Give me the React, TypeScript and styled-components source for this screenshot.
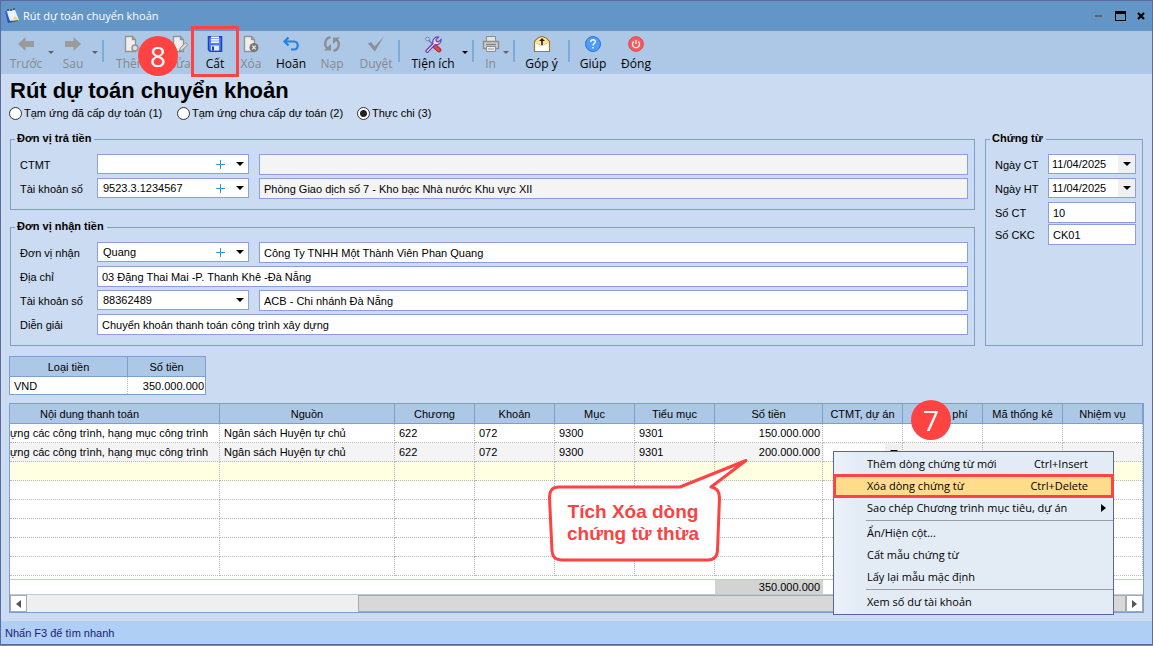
import React from 'react';
import styled, { createGlobalStyle } from 'styled-components';

const formFont = '"Liberation Sans", Arial, sans-serif';
const uiFont = '"Open Sans", "Segoe UI", sans-serif';
const line = '#7c9fd0';
const inputLine = '#8a9fe0';
const red = '#ff4242';

const GlobalStyle = createGlobalStyle`
  *, *::before, *::after { box-sizing: border-box; }
  body {
    margin: 0;
    background: #85858c;
    font: 11px/14px ${formFont};
    color: #000;
  }
  button, input, select { font: inherit; color: inherit; }
`;

const Window = styled.div`
  display: flex;
  flex-direction: column;
  min-height: calc(100vh - 1px);
  border: 1px solid #5c6a9f;
  background: #cbdbf1;
`;

const TitleBar = styled.header`
  display: flex;
  align-items: center;
  height: 30px;
  padding: 0 5px 0 3px;
  background: #6495c7;
  color: #fff;
  font: 11px/16px ${uiFont};
`;

const TitleText = styled.span`
  flex: 1;
  padding-left: 3px;
`;

const WindowButton = styled.button`
  display: grid;
  place-items: center;
  width: 22px;
  height: 22px;
  padding: 0;
  border: 0;
  background: none;
  &:last-child { width: 12px; margin-left: 4px; }
`;

const Toolbar = styled.nav`
  display: flex;
  align-items: flex-start;
  height: 43px;
  padding-left: 3px;
  background: #adc8e6;
  font: 12px/16px ${uiFont};
`;

const ToolButton = styled.button<{ $width: number; $off?: boolean }>`
  position: relative;
  display: flex;
  flex-direction: column;
  align-items: center;
  gap: 3px;
  flex: none;
  width: ${p => p.$width}px;
  padding: 4px 0 0;
  border: 0;
  background: none;
  white-space: nowrap;
  color: ${p => (p.$off ? '#85888c' : '#000')};
`;

const ToolLabel = styled.span`
  display: flex;
  justify-content: center;
  width: 0;
`;

const ToolArrow = styled.button<{ $off?: boolean }>`
  display: grid;
  place-items: center;
  width: 6px;
  height: 43px;
  padding: 0;
  border: 0;
  background: none;
  color: ${p => (p.$off ? '#5d6166' : '#000')};
`;

const Separator = styled.span`
  flex: none;
  width: 2px;
  height: 22px;
  margin: 9px 4px 0;
  background: #7faade;
`;

const StepBadge = styled.span`
  position: absolute;
  z-index: 3;
  display: grid;
  place-items: center;
  width: 40px;
  height: 40px;
  border-radius: 50%;
  background: ${red};
  color: #fff;
  font: 500 28px/40px ${uiFont};
`;

const ToolBadge = styled(StepBadge)`
  top: 5px;
  left: 30px;
`;

const GridBadge = styled(StepBadge)`
  top: -4px;
  right: 192px;
`;

const ToolFrame = styled.span`
  position: absolute;
  z-index: 2;
  top: -5px;
  left: 50%;
  width: 48px;
  height: 51px;
  margin-left: -24px;
  border: 3px solid ${red};
`;

const Body = styled.main`
  padding: 6px 8px 8px;
`;

const Heading = styled.h1`
  margin: 0;
  padding-left: 1px;
  font: bold 22px/22px ${formFont};
`;

const RadioRow = styled.div`
  display: flex;
  height: 22px;
  padding-top: 4px;
`;

const RadioLabel = styled.label<{ $width: number }>`
  display: flex;
  align-items: center;
  gap: 2px;
  height: 14px;
  width: ${p => p.$width}px;
  white-space: nowrap;
`;

const Radio = styled.input`
  appearance: none;
  flex: none;
  width: 13px;
  height: 13px;
  margin: 0;
  border: 1px solid #333;
  border-radius: 50%;
  background: #fff;
  &:checked { background: radial-gradient(circle, #222 3px, #fff 4px); }
`;

const FormArea = styled.div`
  display: flex;
  gap: 10px;
  padding: 9px 1px 0;
`;

const FormColumn = styled.div`
  display: flex;
  flex-direction: column;
  flex: 1;
  min-width: 0;
  gap: 11px;
`;

const Group = styled.fieldset`
  min-width: 0;
  margin: 0;
  padding: 8px 6px 7px 8px;
  border: 1px solid ${line};
`;

const SideGroup = styled(Group)`
  width: 158px;
`;

const Legend = styled.legend`
  height: 13px;
  margin-left: -4px;
  padding: 0 3px 0 2px;
  font-weight: bold;
  line-height: 11px;
`;

const FieldGrid = styled.div`
  display: grid;
  grid-template-columns: 78px 152px 1fr;
  grid-auto-rows: 24px;
`;

const SideGrid = styled.div`
  display: grid;
  grid-template-columns: 54px 1fr;
  grid-template-rows: 24px 24px 22px 22px;
`;

const FieldLabel = styled.label`
  padding: 4px 0 0 1px;
  white-space: nowrap;
`;

const TextBox = styled.input<{ $wide?: boolean; $next?: boolean }>`
  width: ${p => (p.$next ? 'calc(100% - 10px)' : '100%')};
  min-width: 0;
  height: 21px;
  margin: 0 0 0 ${p => (p.$next ? 10 : 0)}px;
  padding: 0 4px;
  border: 1px solid ${inputLine};
  border-radius: 0;
  background: #fff;
  grid-column: ${p => (p.$wide ? 'span 2' : 'auto')};
  &:read-only { background: #f4f4f4; }
`;

const Combo = styled.div`
  position: relative;
  height: 20px;
`;

const ComboSelect = styled.select`
  appearance: none;
  width: 100%;
  height: 20px;
  margin: 0;
  padding: 0 36px 0 5px;
  border: 1px solid ${inputLine};
  border-radius: 0;
  background: #fff;
`;

const DateSelect = styled(ComboSelect)`
  padding: 0 18px 0 3px;
  background: linear-gradient(#f0f0f0, #f0f0f0) right / 17px 100% no-repeat #fff;
`;

const ComboArrow = styled.span`
  position: absolute;
  top: 0;
  right: 5px;
  display: grid;
  place-items: center;
  height: 20px;
  pointer-events: none;
`;

const ComboAdd = styled.button`
  position: absolute;
  top: 1px;
  right: 20px;
  display: grid;
  place-items: center;
  width: 18px;
  height: 18px;
  padding: 0;
  border: 0;
  background: none;
`;

const SumTable = styled.table`
  width: 197px;
  margin-top: 10px;
  border: 1px solid ${line};
  border-spacing: 0;
  table-layout: fixed;
  background: #fff;
`;

const GridPanel = styled.section`
  position: relative;
  margin-top: 8px;
  border: 1px solid ${line};
  background: #fff;
`;

const DataTable = styled.table`
  width: 100%;
  border-spacing: 0;
  table-layout: fixed;
`;

const Th = styled.th<{ $cut?: boolean }>`
  height: 20px;
  padding: 0 ${p => (p.$cut ? 50 : 0)}px 0 0;
  border: solid ${line};
  border-width: 0 1px 1px 0;
  background: #adc8e6;
  font-weight: normal;
  text-align: center;
  white-space: nowrap;
  ${SumTable} &:last-child { border-right: 0; }
`;

const Td = styled.td<{ $right?: boolean; $clip?: boolean }>`
  height: 19px;
  padding: 0 ${p => (p.$right ? 2 : 0)}px 0 ${p => (p.$right || p.$clip ? 0 : 4)}px;
  border: dotted #b9b9b9;
  border-width: 0 1px 1px 0;
  overflow: hidden;
  text-align: ${p => (p.$right ? 'right' : 'left')};
  white-space: nowrap;
  ${SumTable} & { height: 17px; border-bottom: 0; }
  ${SumTable} &:last-child { border-right: 0; padding-right: 1px; }
`;

const Tr = styled.tr<{ $tone?: string }>`
  background: ${p => p.$tone || '#fff'};
`;

const EditTd = styled(Td)`
  padding: 0 0 0 1px;
`;

const CellEditor = styled.div`
  display: flex;
  height: 17px;
  & > input { flex: 1; min-width: 0; height: 17px; padding: 0; border: 0; background: #fff; }
  & > button { display: grid; place-items: center; width: 17px; padding: 0; border: 0; background: #f0f0f0; }
`;

const TotalTable = styled(DataTable)`
  margin-top: 3px;
  border: solid #b9cbdc;
  border-width: 1px 0;
`;

const TotalTd = styled.td<{ $sum?: boolean }>`
  height: 14px;
  padding: 0 3px 0 0;
  background: ${p => (p.$sum ? '#d3d3d3' : '#fff')};
  text-align: right;
  line-height: 14px;
`;

const ScrollBar = styled.div`
  display: flex;
  height: 17px;
  background: #efefef;
`;

const ScrollButton = styled.button`
  display: grid;
  place-items: center;
  width: 17px;
  padding: 0;
  border: 1px solid #a9a9a9;
  background: #fff;
`;

const ScrollGap = styled.span`
  flex: 332;
`;

const ScrollThumb = styled.span`
  flex: 767;
  border: 1px solid #a9a9a9;
  background: #d8d8d8;
`;

const Menu = styled.div`
  position: absolute;
  z-index: 2;
  top: 47px;
  right: 29px;
  width: 281px;
  padding: 1px 0;
  border: 1px solid #5a66a0;
  background: linear-gradient(90deg, #edf2fa, #e3ebf5 24px);
  font: 11px/20px ${uiFont};
`;

const MenuItem = styled.button<{ $hot?: boolean }>`
  position: relative;
  display: flex;
  align-items: center;
  justify-content: space-between;
  width: 100%;
  height: 22px;
  padding: 0 25px 0 33px;
  border: 0;
  background: ${p => (p.$hot ? '#ffdb8c' : 'none')};
  outline: ${p => (p.$hot ? `3px solid ${red}` : '0')};
  outline-offset: -2px;
  white-space: nowrap;
`;

const SubArrow = styled.svg`
  position: absolute;
  right: 7px;
`;

const MenuLine = styled.hr`
  height: 1px;
  margin: 1px 0 1px 32px;
  border: 0;
  background: #9b9da3;
`;

const Callout = styled.div`
  position: absolute;
  z-index: 1;
  top: 51px;
  left: 536px;
  width: 206px;
  height: 110px;
  padding: 46px 32px 0 0;
  color: #fa4343;
  font: bold 19px/22px ${formFont};
  text-align: center;
  & > svg { position: absolute; inset: 0; }
  & > span { position: relative; white-space: nowrap; }
`;

const StatusBar = styled.footer`
  height: 23px;
  margin-top: auto;
  padding: 5px 4px;
  background: #b0cff4;
  color: #20207c;
`;

const Down = ({ size = 8 }: { size?: number }) => (
  <svg width={size} height={size / 2} viewBox="0 0 8 4" aria-hidden="true">
    <path d="M0 0h8L4 4z" fill="currentColor" />
  </svg>
);

const Icon = ({ children }: { children: React.ReactNode }) => (
  <svg width="18" height="18" viewBox="0 0 18 18" fill="none" aria-hidden="true">{children}</svg>
);

const Page = () => (
  <path d="M2.500 1.500h7l3 3v12h-10zM9.500 1.500v3h3" fill="#eee" stroke="#929292" strokeWidth="1.300" />
);

const icons = {
  back: <path d="M1 9l7.500-7v4H17v6H8.500v4z" fill="#9b9b9b" />,
  next: <path d="M17 9L9.500 2v4H1v6h8.500v4z" fill="#9b9b9b" />,
  add: <><Page /><circle cx="12" cy="13" r="3" fill="#ddd" stroke="#949494" strokeWidth="1.500" /></>,
  edit: <><Page /><path d="M8.500 16l.8-3 5.500-5.500 2 2L11.500 15z" fill="#ddd" stroke="#8c8c8c" /></>,
  remove: <><Page /><circle cx="12" cy="12.500" r="4.500" fill="#777" /><path d="M10.200 10.700l3.600 3.600m0-3.600l-3.600 3.600" stroke="#eee" strokeWidth="1.200" /></>,
  save: (
    <>
      <path d="M2.500 1.800h13v14.400H4L2.500 14.700z" fill="#4c7dff" stroke="#1c3ec8" strokeWidth="1.500" />
      <path d="M5 1.500h8V8H5z" fill="#f2f5ff" />
      <path d="M5 3.500h8M5 6h8" stroke="#8ea8f0" />
      <path d="M5 10.500h8v5H5z" fill="#e6ecfb" />
      <path d="M6 11.500h2v4H6z" fill="#1c3ec8" />
    </>
  ),
  undo: <path d="M6.500 2.500L2.500 6.500l4 4M3 6.500h9c5 0 5 8 0 8H9" stroke="#2481e6" strokeWidth="2.200" />,
  reload: (
    <>
      <path d="M7.500 2.300C2 3 .5 10 4.500 13.500M10.500 15.700C16 15 17.500 8 13.500 4.500" stroke="#8c8f93" strokeWidth="2.400" />
      <path d="M1 15.500h7V9zM17 2.500h-7V9z" fill="#8c8f93" />
    </>
  ),
  check: <path d="M1 8.500l3-1.500 3.500 4.500L17 1.500 7.800 16.500z" fill="#8c8f93" />,
  tools: (
    <>
      <path d="M3 3.500l10 10" stroke="#6080b8" strokeWidth="1.500" />
      <circle cx="3.500" cy="4" r="1.800" fill="#c9dcf8" stroke="#6482bc" />
      <path d="M11 11.500l4 3.500" stroke="#b3202c" strokeWidth="4.600" strokeLinecap="round" />
      <path d="M11 11.500l4 3.500" stroke="#e84650" strokeWidth="2.600" strokeLinecap="round" />
      <path d="M2 15.500l7-7c-1-4 2-7 5.500-6.500l-2.500 2.700.6 1.700 1.800.5 2.600-2.500c.5 3.600-2.500 6-6 5.300l-6.800 7.200c-1.300 1-3-.2-2.200-1.400z" fill="#e6d8fa" stroke="#6e3fa4" strokeWidth="1.200" />
    </>
  ),
  print: (
    <>
      <path d="M4.500 1.500h9v5h-9z" fill="#e4e4e4" stroke="#8d8d8d" />
      <path d="M1.500 6.500h15v7h-15z" fill="#cfcfcf" stroke="#8d8d8d" strokeWidth="1.400" />
      <path d="M4 9.500h10" stroke="#858585" strokeWidth="1.500" />
      <path d="M4.500 11.500h9v5h-9z" fill="#eee" stroke="#8d8d8d" />
      <path d="M6 14h6" stroke="#999" />
    </>
  ),
  feedback: (
    <>
      <path d="M1.500 6.500L5 3l4-1.500L13 3l3.500 3.500v10h-15z" fill="#fff" stroke="#a5781c" strokeWidth="1.200" />
      <path d="M2.500 7L5 4l4-1.500L13 4l2.500 3L9 10z" fill="#ffe596" />
      <path d="M2 7l7 4 7-4" stroke="#e3c877" />
      <path d="M9 3L6 6h2.200v4h1.600V6H12z" fill="#222" />
    </>
  ),
  help: (
    <>
      <circle cx="9" cy="9" r="7.500" fill="#4d9cfb" stroke="#2675d8" />
      <path d="M6.800 7c0-3 4.500-2.800 4.500-.2C11.300 8.700 9 8.500 9 10.500M9 12v1.600" stroke="#fff" strokeWidth="1.400" />
    </>
  ),
  close: (
    <>
      <circle cx="9" cy="9" r="7.300" fill="#fb5a5f" stroke="#e23c42" />
      <path d="M9 5v4M6.800 6.500a3.500 3.500 0 1 0 4.400 0" stroke="#fff" strokeWidth="1.200" />
    </>
  ),
};

type ToolProps = {
  icon: keyof typeof icons;
  label: string;
  width: number;
  off?: boolean;
  children?: React.ReactNode;
};

const Tool = ({ icon, label, width, off, children }: ToolProps) => (
  <ToolButton type="button" $width={width} $off={off}>
    <Icon>{icons[icon]}</Icon>
    <ToolLabel>{label}</ToolLabel>
    {children}
  </ToolButton>
);

type ComboProps = { id: string; value: string; add?: boolean };

const ComboBox = ({ id, value, add }: ComboProps) => (
  <Combo>
    <ComboSelect id={id} defaultValue={value}>
      <option>{value}</option>
    </ComboSelect>
    {add && (
      <ComboAdd type="button" aria-label="+">
        <svg width="9" height="9" viewBox="0 0 9 9" aria-hidden="true">
          <path d="M4.500 0v9M0 4.500h9" stroke="#2f93e6" />
        </svg>
      </ComboAdd>
    )}
    <ComboArrow><Down /></ComboArrow>
  </Combo>
);

const DateBox = ({ id, value }: ComboProps) => (
  <Combo>
    <DateSelect id={id} defaultValue={value}>
      <option>{value}</option>
    </DateSelect>
    <ComboArrow><Down /></ComboArrow>
  </Combo>
);

const Columns = () => (
  <colgroup>
    <col />
    {[175, 80, 80, 80, 80, 108, 80, 80, 80, 80].map((w, i) => <col key={i} width={w} />)}
  </colgroup>
);

const headers = [
  'Nội dung thanh toán', 'Nguồn', 'Chương', 'Khoản', 'Mục', 'Tiểu mục',
  'Số tiền', 'CTMT, dự án', 'Khoản phí', 'Mã thống kê', 'Nhiệm vụ',
];

const filled = [
  ['ựng các công trình, hạng mục công trình', 'Ngân sách Huyện tự chủ', '622', '072', '9300', '9301', '150.000.000', '', '', '', ''],
  ['ựng các công trình, hạng mục công trình', 'Ngân sách Huyện tự chủ', '622', '072', '9300', '9301', '200.000.000', '', '', '', ''],
];

const emptyTones = ['#ffffe1', '#fff', '#fff', '#fff', '#fff', '#fff'];

const radios = [
  { label: 'Tạm ứng đã cấp dự toán (1)', width: 168 },
  { label: 'Tạm ứng chưa cấp dự toán (2)', width: 180 },
  { label: 'Thực chi (3)', width: 90 },
];

export default function App() {
  return (
    <>
      <GlobalStyle />
      <Window>
        <TitleBar>
          <svg width="16" height="18" viewBox="0 0 16 18" aria-hidden="true">
            <path d="M1 4l9-1 4 11-10 2z" fill="#3f6fe0" />
            <path d="M3 4l8-1 4 10-9 2z" fill="#e8f3ff" />
            <path d="M1 4l3 12 10-2-.6-1.500L6 14z" fill="#2d50c8" />
            <path d="M11 9l4 4-7 1z" fill="#ffd75e" />
            <path d="M4 4V2m3 2V2m3 1V1" stroke="#333a55" strokeWidth="1.200" />
          </svg>
          <TitleText>Rút dự toán chuyển khoản</TitleText>
          <WindowButton type="button" aria-label="Thu nhỏ">
            <svg width="7" height="2" aria-hidden="true"><path d="M0 0h7v2H0z" fill="#66625f" /></svg>
          </WindowButton>
          <WindowButton type="button" aria-label="Phóng to">
            <svg width="11" height="10" aria-hidden="true"><path d="M0 0h11v10H0zM1 3v6h9V3z" fill="#000" fillRule="evenodd" /></svg>
          </WindowButton>
          <WindowButton type="button" aria-label="Đóng cửa sổ">
            <svg width="8" height="8" viewBox="0 0 8 8" aria-hidden="true"><path d="M1 1l6 6m0-6L1 7" stroke="#000" strokeWidth="2.200" /></svg>
          </WindowButton>
        </TitleBar>

        <Toolbar>
          <Tool icon="back" label="Trước" width={44} off />
          <ToolArrow type="button" aria-label="Trước" $off><Down size={6} /></ToolArrow>
          <Tool icon="next" label="Sau" width={38} off />
          <ToolArrow type="button" aria-label="Sau" $off><Down size={6} /></ToolArrow>
          <Separator />
          <Tool icon="add" label="Thêm" width={48} off><ToolBadge>8</ToolBadge></Tool>
          <Tool icon="edit" label="Sửa" width={48} off />
          <Tool icon="save" label="Cất" width={22}><ToolFrame /></Tool>
          <Tool icon="remove" label="Xóa" width={50} off />
          <Tool icon="undo" label="Hoãn" width={30} />
          <Tool icon="reload" label="Nạp" width={52} off />
          <Tool icon="check" label="Duyệt" width={36} off />
          <Separator />
          <Tool icon="tools" label="Tiện ích" width={58} />
          <ToolArrow type="button" aria-label="Tiện ích"><Down size={6} /></ToolArrow>
          <Separator />
          <Tool icon="print" label="In" width={25} off />
          <ToolArrow type="button" aria-label="In" $off><Down size={6} /></ToolArrow>
          <Separator />
          <Tool icon="feedback" label="Góp ý" width={45} />
          <Separator />
          <Tool icon="help" label="Giúp" width={38} />
          <Tool icon="close" label="Đóng" width={48} />
        </Toolbar>

        <Body>
          <Heading>Rút dự toán chuyển khoản</Heading>
          <RadioRow>
            {radios.map((r, i) => (
              <RadioLabel key={r.label} $width={r.width}>
                <Radio type="radio" name="kind" defaultChecked={i === 2} />
                {r.label}
              </RadioLabel>
            ))}
          </RadioRow>

          <FormArea>
            <FormColumn>
              <Group>
                <Legend>Đơn vị trả tiền</Legend>
                <FieldGrid>
                  <FieldLabel htmlFor="ctmt">CTMT</FieldLabel>
                  <ComboBox id="ctmt" value="" add />
                  <TextBox $next readOnly aria-label="CTMT" value="" />
                  <FieldLabel htmlFor="payAccount">Tài khoản số</FieldLabel>
                  <ComboBox id="payAccount" value="9523.3.1234567" add />
                  <TextBox $next readOnly aria-label="Tài khoản số" value="Phòng Giao dịch số 7 - Kho bạc Nhà nước Khu vực XII" />
                </FieldGrid>
              </Group>
              <Group>
                <Legend>Đơn vị nhận tiền</Legend>
                <FieldGrid>
                  <FieldLabel htmlFor="payee">Đơn vị nhận</FieldLabel>
                  <ComboBox id="payee" value="Quang" add />
                  <TextBox $next aria-label="Đơn vị nhận" defaultValue="Công Ty TNHH Một Thành Viên Phan Quang" />
                  <FieldLabel htmlFor="address">Địa chỉ</FieldLabel>
                  <TextBox id="address" $wide defaultValue="03 Đặng Thai Mai -P. Thanh Khê -Đà Nẵng" />
                  <FieldLabel htmlFor="account">Tài khoản số</FieldLabel>
                  <ComboBox id="account" value="88362489" />
                  <TextBox $next aria-label="Tài khoản số" defaultValue="ACB - Chi nhánh Đà Nẵng" />
                  <FieldLabel htmlFor="note">Diễn giải</FieldLabel>
                  <TextBox id="note" $wide defaultValue="Chuyển khoản thanh toán công trình xây dựng" />
                </FieldGrid>
              </Group>
            </FormColumn>
            <SideGroup>
              <Legend>Chứng từ</Legend>
              <SideGrid>
                <FieldLabel htmlFor="dateCt">Ngày CT</FieldLabel>
                <DateBox id="dateCt" value="11/04/2025" />
                <FieldLabel htmlFor="dateHt">Ngày HT</FieldLabel>
                <DateBox id="dateHt" value="11/04/2025" />
                <FieldLabel htmlFor="noCt">Số CT</FieldLabel>
                <TextBox id="noCt" defaultValue="10" />
                <FieldLabel htmlFor="noCkc">Số CKC</FieldLabel>
                <TextBox id="noCkc" defaultValue="CK01" />
              </SideGrid>
            </SideGroup>
          </FormArea>

          <SumTable>
            <colgroup><col width="118" /><col /></colgroup>
            <thead>
              <tr><Th>Loại tiền</Th><Th>Số tiền</Th></tr>
            </thead>
            <tbody>
              <tr><Td>VND</Td><Td $right>350.000.000</Td></tr>
            </tbody>
          </SumTable>

          <GridPanel>
            <DataTable>
              <Columns />
              <thead>
                <tr>{headers.map((h, i) => <Th key={h} $cut={i === 0}>{h}</Th>)}</tr>
              </thead>
              <tbody>
                {filled.map((row, r) => (
                  <Tr key={r} $tone={r === 1 ? '#f4f4f4' : undefined}>
                    {row.map((cell, c) =>
                      r === 1 && c === 7 ? (
                        <EditTd key={c}>
                          <CellEditor>
                            <input aria-label="CTMT, dự án" />
                            <button type="button" aria-label="CTMT, dự án"><Down /></button>
                          </CellEditor>
                        </EditTd>
                      ) : (
                        <Td key={c} $right={c === 6} $clip={c === 0}>{cell}</Td>
                      ),
                    )}
                  </Tr>
                ))}
                {emptyTones.map((tone, r) => (
                  <Tr key={r} $tone={tone}>
                    {headers.map(h => <Td key={h} />)}
                  </Tr>
                ))}
              </tbody>
            </DataTable>
            <TotalTable>
              <Columns />
              <tbody>
                <tr>
                  {headers.map((h, i) => (
                    <TotalTd key={h} $sum={i === 6}>{i === 6 ? '350.000.000' : ''}</TotalTd>
                  ))}
                </tr>
              </tbody>
            </TotalTable>
            <ScrollBar>
              <ScrollButton type="button" aria-label="Cuộn trái">
                <svg width="5" height="8" aria-hidden="true"><path d="M5 0v8L0 4z" fill="#555" /></svg>
              </ScrollButton>
              <ScrollGap />
              <ScrollThumb />
              <ScrollButton type="button" aria-label="Cuộn phải">
                <svg width="5" height="8" aria-hidden="true"><path d="M0 0v8l5-4z" fill="#555" /></svg>
              </ScrollButton>
            </ScrollBar>

            <GridBadge>7</GridBadge>

            <Callout>
              <svg width="206" height="110" viewBox="546 455 206 110" fill="none" aria-hidden="true">
                <path
                  d="M559 487H680L746 460.500 711 487Q719.500 488 719.500 498L717.500 550Q717 560 708 560H562Q552.500 560 552 551L549.500 498Q549 487 559 487Z"
                  fill="#fff"
                  stroke={red}
                  strokeWidth="3"
                  strokeLinejoin="round"
                />
              </svg>
              <span>Tích Xóa dòng<br />chứng từ thừa</span>
            </Callout>

            <Menu>
              <MenuItem type="button"><span>Thêm dòng chứng từ mới</span><span>Ctrl+Insert</span></MenuItem>
              <MenuItem type="button" $hot><span>Xóa dòng chứng từ</span><span>Ctrl+Delete</span></MenuItem>
              <MenuItem type="button">
                <span>Sao chép Chương trình mục tiêu, dự án</span>
                <SubArrow width="5" height="8" aria-hidden="true"><path d="M0 0v8l5-4z" fill="#000" /></SubArrow>
              </MenuItem>
              <MenuLine />
              <MenuItem type="button">Ẩn/Hiện cột...</MenuItem>
              <MenuItem type="button">Cất mẫu chứng từ</MenuItem>
              <MenuItem type="button">Lấy lại mẫu mặc định</MenuItem>
              <MenuLine />
              <MenuItem type="button">Xem số dư tài khoản</MenuItem>
            </Menu>
          </GridPanel>
        </Body>

        <StatusBar>Nhấn F3 để tìm nhanh</StatusBar>
      </Window>
    </>
  );
}
